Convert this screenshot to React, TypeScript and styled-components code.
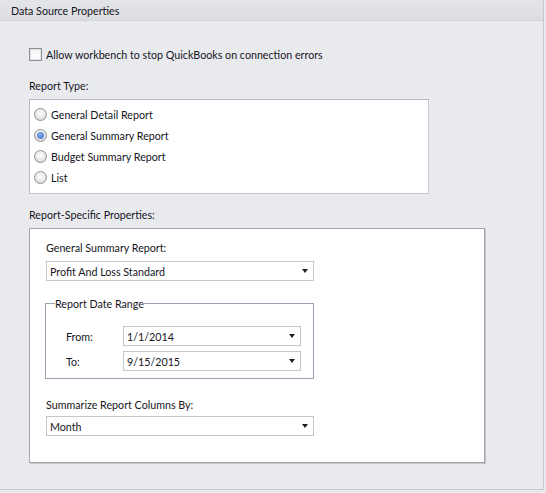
import React from "react";
import styled, { createGlobalStyle } from "styled-components";

const Global = createGlobalStyle`
  html, body { margin: 0; padding: 0; background: #e9eaee; }
  body { font-family: Lato, "Noto Sans", sans-serif; font-size: 10.7px; color: #15151c; }
  * { box-sizing: border-box; }
`;

const Page = styled.div`
  width: 544px;
  height: 490px;
  background: #e9eaee;
  border-right: 1px solid #c9cacf;
  border-bottom: 1px solid #c9cacf;
  display: flex;
  flex-direction: column;
`;

const Header = styled.div`
  height: 21px;
  flex: none;
  background: linear-gradient(#e4e5e9, #dcdde1);
  border-bottom: 1px solid #d3d4d9;
  padding-left: 11px;
  display: flex;
  align-items: center;
`;

const Body = styled.div`
  padding: 26px 0 0 29px;
  display: flex;
  flex-direction: column;
`;

const CheckRow = styled.label`
  display: flex;
  align-items: center;
  gap: 4px;
  height: 14px;
`;

const CheckBox = styled.span`
  width: 13px;
  height: 13px;
  border: 1px solid #8f9096;
  background: linear-gradient(#f4f4f6, #ffffff);
  box-shadow: inset 0 0 0 1px #e2e3e6;
`;

const SectionLabel = styled.div<{ $top: number }>`
  margin-top: ${(p) => p.$top}px;
  height: 14px;
  line-height: 14px;
`;

const WhiteBox = styled.div`
  margin-top: 6px;
  width: 400px;
  height: 95px;
  background: #fff;
  border: 1px solid #b9bac0;
  border-right-color: #c4c5ca;
  border-bottom-color: #c4c5ca;
  padding: 4px 0 0 4px;
  display: flex;
  flex-direction: column;
`;

const RadioRow = styled.div`
  height: 21px;
  display: flex;
  align-items: center;
  gap: 4px;
`;

const Radio = styled.span<{ $on?: boolean }>`
  width: 13px;
  height: 13px;
  border-radius: 50%;
  border: 1px solid #8e9096;
  background: radial-gradient(circle at 50% 40%, #ffffff 0%, #e8e8ea 55%, #c9cacd 100%);
  display: flex;
  align-items: center;
  justify-content: center;
  &::after {
    content: "";
    display: ${(p) => (p.$on ? "block" : "none")};
    width: 5px;
    height: 5px;
    border-radius: 50%;
    background: radial-gradient(circle at 40% 35%, #8fb4f0, #2a5fc8);
    box-shadow: 0 0 0 1px #5b86d6;
  }
`;

const PropsBox = styled.div`
  margin-top: 6px;
  width: 456px;
  height: 235px;
  background: #fff;
  border: 1px solid #a3a4ac;
  box-shadow: 1px 1px 0 #c4c5cb;
  padding: 12px 0 0 16px;
  display: flex;
  flex-direction: column;
`;

const FieldLabel = styled.div<{ $top?: number }>`
  margin-top: ${(p) => p.$top ?? 0}px;
  height: 14px;
  line-height: 14px;
`;

const Combo = styled.div<{ $w: number; $top?: number }>`
  margin-top: ${(p) => p.$top ?? 0}px;
  width: ${(p) => p.$w}px;
  height: 20px;
  border: 1px solid #c6c7cc;
  background: #fff;
  display: flex;
  align-items: center;
  padding: 0 5px 0 3px;
  justify-content: space-between;
`;

const Arrow = styled.span`
  width: 0;
  height: 0;
  border-left: 3.5px solid transparent;
  border-right: 3.5px solid transparent;
  border-top: 4px solid #1f1f2a;
`;

const Group = styled.fieldset`
  margin: 16px 0 0 -1px;
  width: 269px;
  height: 82px;
  border: 1px solid #9fa2b2;
  padding: 16px 0 0 20px;
  display: flex;
  flex-direction: column;
  gap: 5px;
`;

const Legend = styled.legend`
  margin-left: -11px;
  padding: 0;
`;

const DateRow = styled.div`
  display: flex;
  align-items: center;
`;

const DateLabel = styled.span`
  width: 57px;
`;

function Dropdown({ w, top, value }: { w: number; top?: number; value: string }) {
  return (
    <Combo $w={w} $top={top}>
      <span>{value}</span>
      <Arrow />
    </Combo>
  );
}

export default function App() {
  return (
    <>
      <Global />
      <Page>
        <Header>Data Source Properties</Header>
        <Body>
          <CheckRow>
            <CheckBox />
            <span>Allow workbench to stop QuickBooks on connection errors</span>
          </CheckRow>
          <SectionLabel $top={18}>Report Type:</SectionLabel>
          <WhiteBox>
            <RadioRow><Radio />General Detail Report</RadioRow>
            <RadioRow><Radio $on />General Summary Report</RadioRow>
            <RadioRow><Radio />Budget Summary Report</RadioRow>
            <RadioRow><Radio />List</RadioRow>
          </WhiteBox>
          <SectionLabel $top={14}>Report-Specific Properties:</SectionLabel>
          <PropsBox>
            <FieldLabel>General Summary Report:</FieldLabel>
            <Dropdown w={268} top={6} value="Profit And Loss Standard" />
            <Group>
              <Legend>Report Date Range</Legend>
              <DateRow>
                <DateLabel>From:</DateLabel>
                <Dropdown w={178} value="1/1/2014" />
              </DateRow>
              <DateRow>
                <DateLabel>To:</DateLabel>
                <Dropdown w={178} value="9/15/2015" />
              </DateRow>
            </Group>
            <FieldLabel $top={19}>Summarize Report Columns By:</FieldLabel>
            <Dropdown w={268} top={4} value="Month" />
          </PropsBox>
        </Body>
      </Page>
    </>
  );
}
